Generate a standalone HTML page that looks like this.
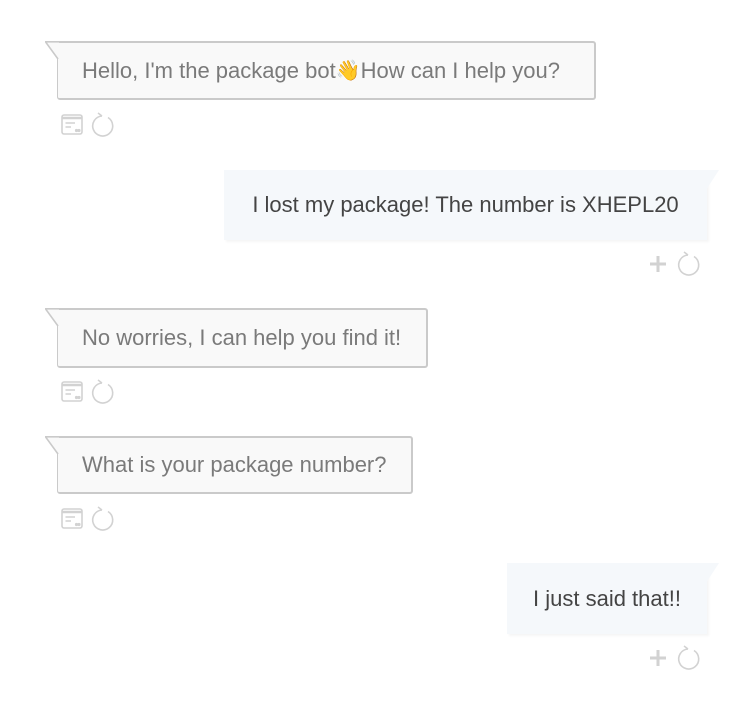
<!DOCTYPE html>
<html><head><style>
body{margin:0;width:746px;height:714px;background:#fff;font-family:"Liberation Sans",Arial,sans-serif;position:relative;overflow:hidden}
.b{position:absolute;left:57px;background:#f9f9f9;border:2px solid #cacaca;border-left:1.5px solid #cacaca;border-radius:0 3px 3px 3px;color:#7a7a7a;font-size:22px;box-sizing:border-box;padding-left:24px;display:flex;align-items:center;white-space:nowrap}
.b .t{position:absolute;left:-13px;top:-2px}
.u{position:absolute;background:#f5f8fb;color:#444;font-size:22px;box-sizing:border-box;display:flex;align-items:center;justify-content:center;white-space:nowrap;box-shadow:2px 2px 2px rgba(0,0,0,.04)}
.u .t{position:absolute;right:-13px;top:0}
.ic{position:absolute}
</style></head><body>
<div class="b" style="top:41px;width:539px;height:59px"><svg class="t" width="14" height="20"><path d="M0 0.8 H14 V19 Z" fill="#f9f9f9"/><path d="M14 0.8 H0.5 L13 18" fill="none" stroke="#cacaca" stroke-width="1.6"/></svg>Hello, I'm the package bot <span style="font-size:20px">👋</span>How can I help you?</div>
<div class="u" style="left:224px;top:170px;width:483px;height:70px"><svg class="t" width="14" height="22"><path d="M0 0 H13 L0 20 Z" fill="#f5f8fb"/></svg>I lost my package! The number is XHEPL20</div>
<div class="b" style="top:308px;width:371px;height:60px"><svg class="t" width="14" height="20"><path d="M0 0.8 H14 V19 Z" fill="#f9f9f9"/><path d="M14 0.8 H0.5 L13 18" fill="none" stroke="#cacaca" stroke-width="1.6"/></svg>No worries, I can help you find it!</div>
<div class="b" style="top:436px;width:356px;height:58px"><svg class="t" width="14" height="20"><path d="M0 0.8 H14 V19 Z" fill="#f9f9f9"/><path d="M14 0.8 H0.5 L13 18" fill="none" stroke="#cacaca" stroke-width="1.6"/></svg>What is your package number?</div>
<div class="u" style="left:507px;top:563px;width:200px;height:71px"><svg class="t" width="14" height="22"><path d="M0 0 H13 L0 20 Z" fill="#f5f8fb"/></svg>I just said that!!</div>

<svg class="ic" style="left:60px;top:112px" width="56" height="26"><g fill="none" stroke="#d2d2d2" stroke-width="1.6"><rect x="2" y="3" width="20" height="19" rx="2"/><path d="M2 6 H22" stroke-width="2.5"/><path d="M5.5 11 H15 M5.5 15 H11"/><circle cx="16.5" cy="18.5" r="0.8"/><circle cx="19" cy="18.5" r="0.8"/><path d="M42 4 A10 10 0 1 0 48 5.5"/><path d="M42 4 L38 1" stroke-width="1.5"/></g></svg>
<svg class="ic" style="left:60px;top:379px" width="56" height="26"><g fill="none" stroke="#d2d2d2" stroke-width="1.6"><rect x="2" y="3" width="20" height="19" rx="2"/><path d="M2 6 H22" stroke-width="2.5"/><path d="M5.5 11 H15 M5.5 15 H11"/><circle cx="16.5" cy="18.5" r="0.8"/><circle cx="19" cy="18.5" r="0.8"/><path d="M42 4 A10 10 0 1 0 48 5.5"/><path d="M42 4 L38 1" stroke-width="1.5"/></g></svg>
<svg class="ic" style="left:60px;top:506px" width="56" height="26"><g fill="none" stroke="#d2d2d2" stroke-width="1.6"><rect x="2" y="3" width="20" height="19" rx="2"/><path d="M2 6 H22" stroke-width="2.5"/><path d="M5.5 11 H15 M5.5 15 H11"/><circle cx="16.5" cy="18.5" r="0.8"/><circle cx="19" cy="18.5" r="0.8"/><path d="M42 4 A10 10 0 1 0 48 5.5"/><path d="M42 4 L38 1" stroke-width="1.5"/></g></svg>

<svg class="ic" style="left:648px;top:251px" width="56" height="26"><g fill="none" stroke="#d2d2d2"><path d="M2 13 H18 M10 5 V21" stroke-width="3"/><path d="M40 4 A10 10 0 1 0 46 5.5" stroke-width="1.6"/><path d="M40 4 L36 1" stroke-width="1.5"/></g></svg>
<svg class="ic" style="left:648px;top:645px" width="56" height="26"><g fill="none" stroke="#d2d2d2"><path d="M2 13 H18 M10 5 V21" stroke-width="3"/><path d="M40 4 A10 10 0 1 0 46 5.5" stroke-width="1.6"/><path d="M40 4 L36 1" stroke-width="1.5"/></g></svg>
</body></html>
